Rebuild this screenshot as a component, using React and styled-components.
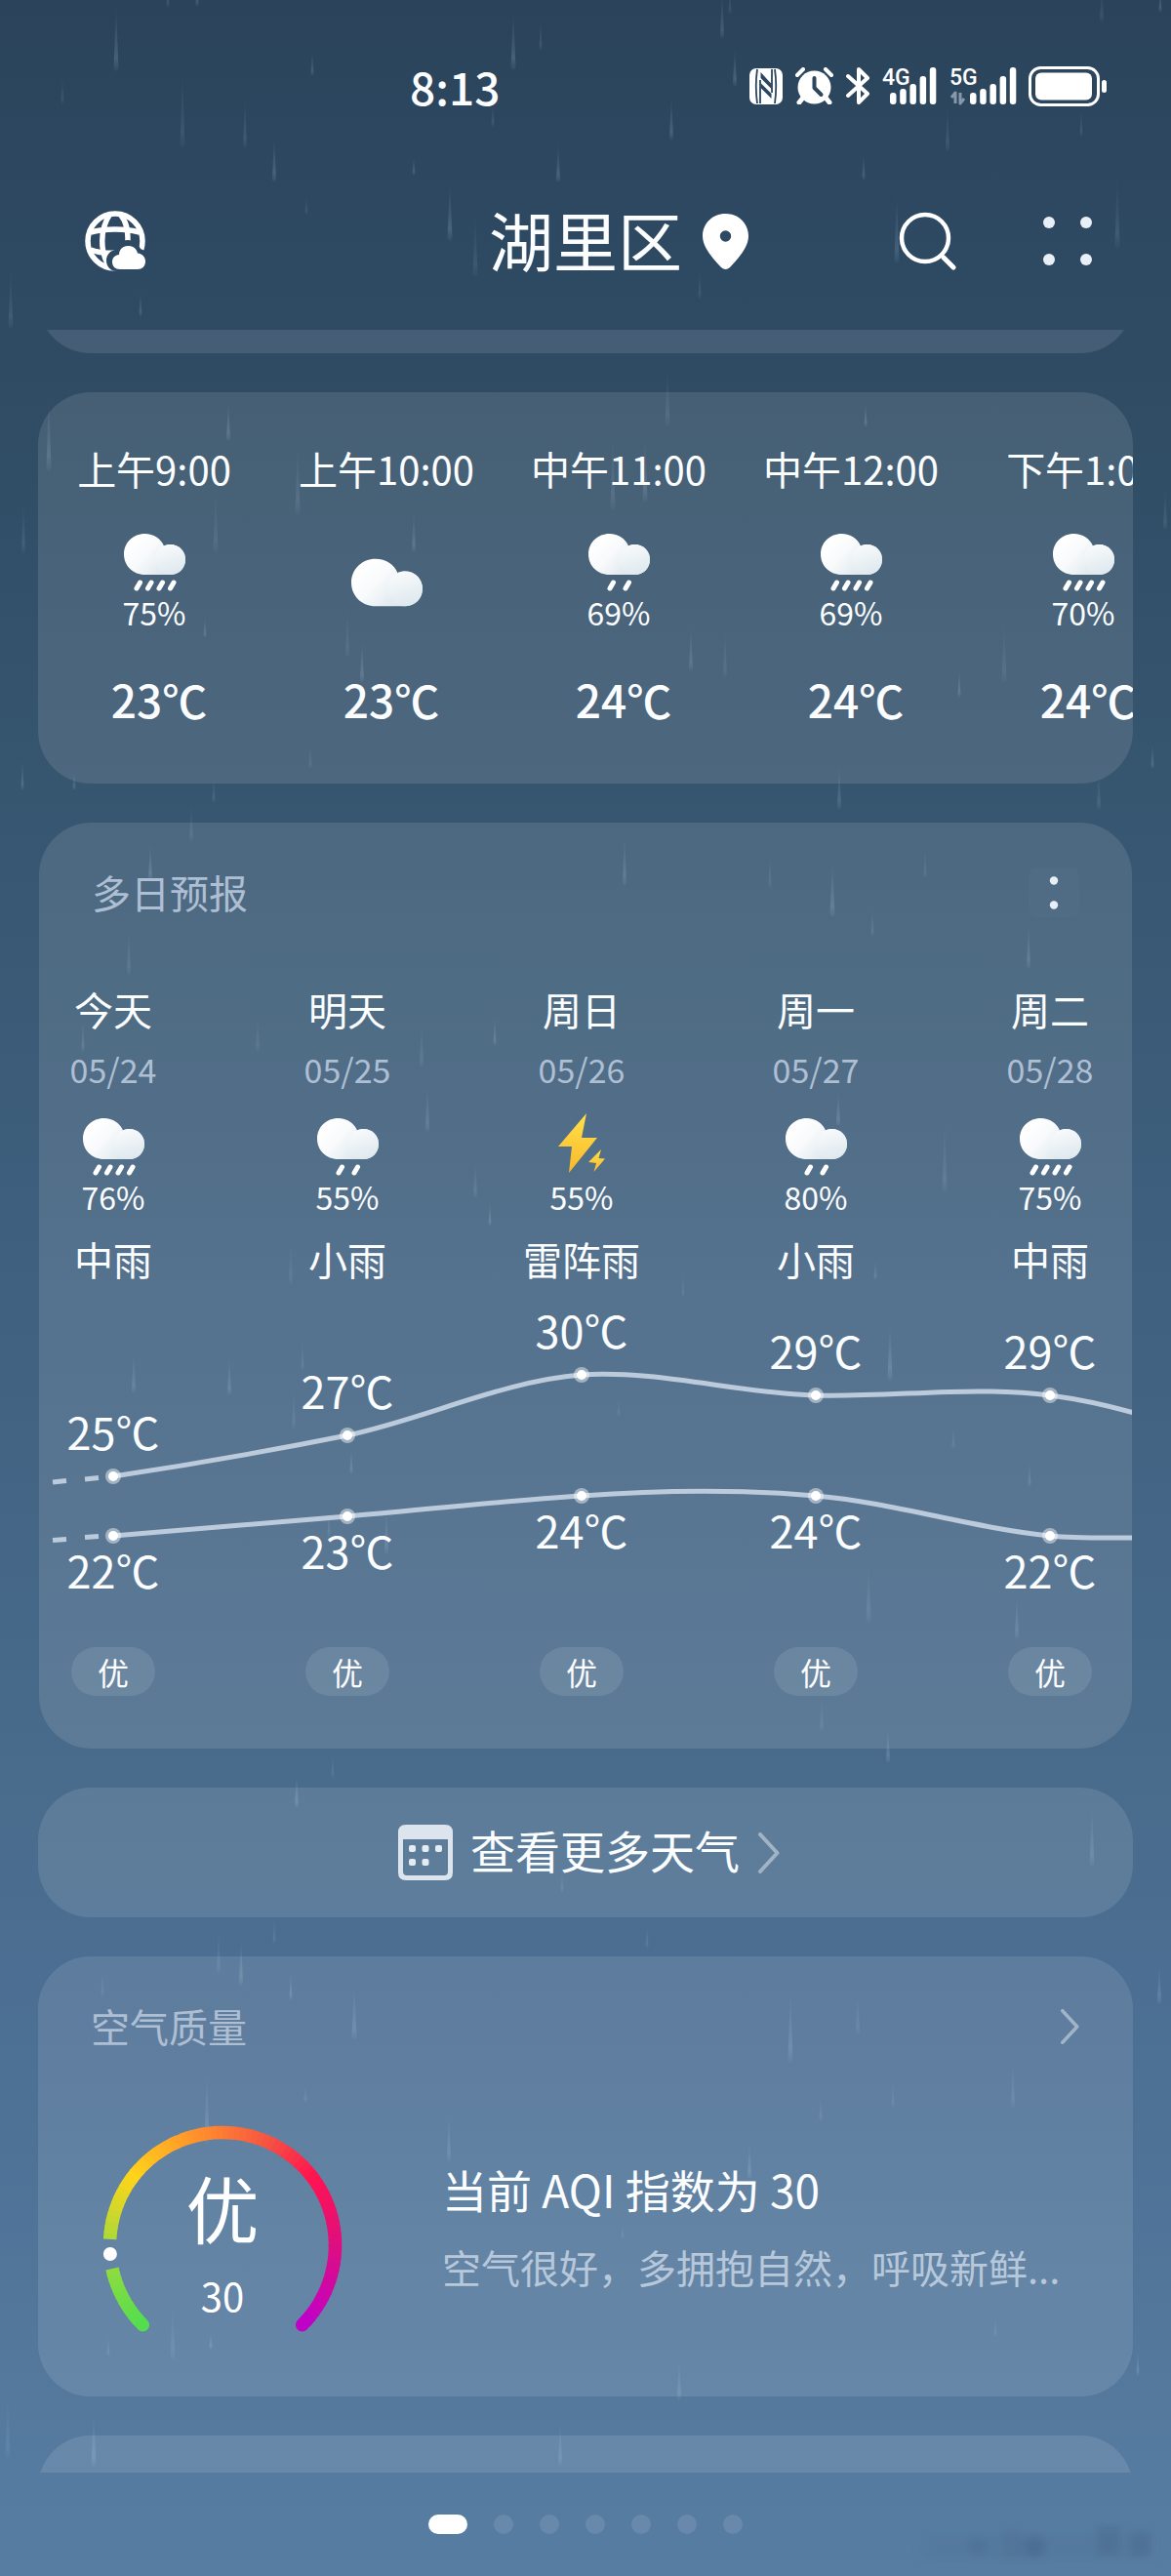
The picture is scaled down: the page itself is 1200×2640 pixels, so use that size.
import React from "react";
import styled, { createGlobalStyle } from "styled-components";

const GlobalStyle = createGlobalStyle`
  * { box-sizing: border-box; }
  body { margin: 0; background: #587da3; }
  button { font: inherit; color: inherit; background: none; border: 0; padding: 0; cursor: pointer; }
  h1, h2, h3, p, ul { margin: 0; padding: 0; font-weight: 400; list-style: none; }
  svg { display: block; flex: none; }
`;

const FONT = '"Noto Sans CJK SC", "Noto Sans", sans-serif';
const MUTED = "#aebfd4";

/* ---------- data ---------- */

const HOURS = [
  { time: "上午9:00", drops: 4, chance: "75%", temp: "23℃" },
  { time: "上午10:00", drops: 0, chance: "", temp: "23℃" },
  { time: "中午11:00", drops: 2, chance: "69%", temp: "24℃" },
  { time: "中午12:00", drops: 4, chance: "69%", temp: "24℃" },
  { time: "下午1:00", drops: 4, chance: "70%", temp: "24℃" },
];

const DAYS = [
  { name: "今天", date: "05/24", drops: 4, chance: "76%", text: "中雨", hi: 25, lo: 22, hiY: 195, loY: 256 },
  { name: "明天", date: "05/25", drops: 2, chance: "55%", text: "小雨", hi: 27, lo: 23, hiY: 153, loY: 236 },
  { name: "周日", date: "05/26", storm: true, chance: "55%", text: "雷阵雨", hi: 30, lo: 24, hiY: 91, loY: 215 },
  { name: "周一", date: "05/27", drops: 2, chance: "80%", text: "小雨", hi: 29, lo: 24, hiY: 112, loY: 215 },
  { name: "周二", date: "05/28", drops: 4, chance: "75%", text: "中雨", hi: 29, lo: 22, hiY: 112, loY: 256 },
];

/* x, top, length of each falling streak */
const STREAKS = [
  [119, 5, 68], [172, -20, 28], [202, -25, 32], [187, 70, 82], [281, 137, 50], [251, 97, 55], [320, 50, 28],
  [314, 200, 20], [526, 10, 62], [554, 18, 34], [424, 160, 20], [487, 217, 67], [461, 185, 62], [11, 275, 62],
  [144, 297, 28], [64, 77, 30], [572, 145, 42], [505, 105, 25], [740, -10, 50], [748, -15, 30], [688, 97, 47],
  [971, 107, 48], [885, 155, 30], [1129, -15, 38], [1189, -15, 28], [1145, 178, 77], [919, 197, 73],
  [717, 273, 34], [753, 47, 42], [1108, 110, 30], [50, 403, 80], [221, 500, 67], [234, 410, 42],
  [305, 453, 75], [424, 523, 43], [356, 620, 54], [371, 653, 47], [24, 513, 54], [210, 630, 24], [318, 760, 28],
  [23, 777, 33], [219, 793, 30], [76, 790, 20], [684, 375, 62], [887, 410, 28], [628, 445, 78], [661, 447, 67],
  [1029, 633, 67], [983, 683, 32], [1194, 500, 43], [708, 640, 48], [743, 640, 55], [1181, 760, 28],
  [1126, 790, 40], [860, 780, 50], [196, 820, 43], [154, 863, 40], [132, 950, 50], [85, 1043, 35],
  [264, 1040, 38], [507, 1040, 32], [432, 1047, 47], [438, 1110, 50], [298, 1267, 50], [502, 1230, 27],
  [487, 1187, 41], [640, 853, 55], [789, 875, 35], [853, 883, 57], [894, 927, 33], [1054, 943, 50],
  [948, 867, 33], [859, 1117, 37], [968, 1150, 73], [897, 1290, 22], [700, 1300, 30], [235, 1390, 40],
  [310, 1373, 32], [137, 1383, 45], [301, 1420, 45], [360, 1483, 28], [337, 1543, 33], [396, 1543, 50],
  [341, 1793, 30], [912, 1353, 62], [890, 1600, 63], [1042, 1633, 47], [842, 1737, 38], [910, 1767, 40],
  [977, 1460, 25], [1055, 1497, 27], [634, 1432, 20], [304, 1815, 38], [576, 1915, 25], [1119, 1850, 63],
  [224, 1970, 53], [247, 1983, 52], [281, 1963, 29], [363, 2033, 57], [105, 2017, 30], [298, 2020, 30],
  [663, 1970, 27], [810, 2037, 77], [879, 2040, 45], [1188, 2010, 44], [1038, 2110, 50], [212, 2120, 77],
  [177, 2357, 62], [216, 2390, 18], [111, 2393, 22], [460, 2163, 53], [8, 2453, 67], [96, 2470, 58],
  [313, 2135, 20], [574, 2480, 47], [915, 2130, 30], [768, 2193, 40], [638, 2277, 18], [696, 2417, 43],
  [1020, 2373, 22], [1166, 2407, 28], [841, 2147, 27],
];

const AQI_STOPS = [
  [0, [84, 222, 78]],
  [0.16, [166, 218, 58]],
  [0.3, [255, 212, 26]],
  [0.46, [255, 138, 46]],
  [0.58, [246, 84, 66]],
  [0.69, [255, 20, 80]],
  [0.83, [222, 14, 130]],
  [1, [190, 0, 204]],
];

/* ---------- page ---------- */

const Page = styled.div`
  position: relative;
  min-height: 100vh;
  overflow: hidden;
  display: flex;
  flex-direction: column;
  font-family: ${FONT};
  color: #fbfdff;
  background: linear-gradient(#2b445c 0%, #2f4b64 14%, #36556f 30%, #3f607f 49%, #496b8b 68%, #4c6f94 79%, #54799d 93%, #587da3 100%);
`;

const RainLayer = styled.svg`
  position: absolute;
  inset: 0;
  pointer-events: none;
`;

const StatusBar = styled.div`
  position: relative;
  display: flex;
  align-items: center;
  height: 160px;
  padding: 16px 66px 0 35%;
`;

const Clock = styled.time`
  font-size: 46px;
  line-height: 56px;
  font-weight: 500;
`;

const StatusIcons = styled.div`
  display: flex;
  align-items: center;
  gap: 13px;
  margin-left: auto;
`;

const Header = styled.header`
  position: relative;
  display: grid;
  grid-template-columns: 1fr auto 1fr;
  align-items: center;
  height: 178px;
  padding: 0 75px 4px 87px;
`;

const City = styled.h1`
  padding: 0 12px 6px 0;
  font-size: 66px;
  line-height: 72px;
`;

const HeaderEnd = styled.div`
  display: flex;
  align-items: center;
  padding-left: 9px;
`;

const Actions = styled.div`
  display: flex;
  align-items: center;
  gap: 82px;
  margin-left: auto;
`;

const IconButton = styled.button`
  display: flex;
  align-items: center;
  justify-content: center;
`;

const Feed = styled.main`
  position: relative;
  display: flex;
  flex-direction: column;
  gap: 40px;
  padding: 0 39px;
`;

const Card = styled.section`
  overflow: hidden;
  border-radius: 54px;
  background: rgba(255, 255, 255, 0.11);
`;

const Peek = styled.div`
  display: flex;
  align-items: ${(p) => (p.$edge === "top" ? "flex-end" : "flex-start")};
  height: ${(p) => (p.$edge === "top" ? 24 : 38)}px;
  overflow: hidden;
`;

const PeekCard = styled(Card)`
  flex: 1 0 auto;
  height: 120px;
`;

const CardHeader = styled.div`
  display: flex;
  align-items: center;
  justify-content: space-between;
  padding: 47px 54px 0;
`;

const CardTitle = styled.h2`
  padding-bottom: 2px;
  color: ${MUTED};
  font-size: 40px;
  line-height: 48px;
`;

const MenuButton = styled(IconButton)`
  width: 52px;
  height: 50px;
  border-radius: 8px;
  background: rgba(255, 255, 255, 0.02);
`;

/* ---------- hourly ---------- */

const HourList = styled.ul`
  display: flex;
  padding: 50px 0 57px;
`;

const Hour = styled.li`
  flex: 0 0 238px;
  display: flex;
  flex-direction: column;
  align-items: center;
  gap: 39px;
`;

const HourTime = styled.span`
  font-size: 40px;
  line-height: 56px;
  white-space: nowrap;
`;

const HourSky = styled.div`
  display: flex;
  flex-direction: column;
  align-items: center;
  justify-content: center;
  height: 100px;
`;

const Chance = styled.span`
  font-size: 32px;
  line-height: 40px;
`;

const HourTemp = styled.span`
  padding-left: 10px;
  font-size: 46px;
  line-height: 60px;
  font-weight: 500;
`;

/* ---------- daily ---------- */

const DayRow = styled.ul`
  display: flex;
  gap: 88px;
  padding-top: ${(p) => p.$top || 0}px;
`;

const Day = styled.li`
  flex: 0 0 152px;
  display: flex;
  flex-direction: column;
  align-items: center;
`;

const DayText = styled.span`
  font-size: 40px;
  line-height: 56px;
  white-space: nowrap;
`;

const DayDate = styled.span`
  margin: 12px 0 28px;
  color: ${MUTED};
  font-size: 34px;
  line-height: 44px;
`;

const DaySummary = styled(DayText)`
  margin-top: 16px;
`;

const Badge = styled.span`
  width: 86px;
  border-radius: 25px;
  background: rgba(255, 255, 255, 0.1);
  font-size: 32px;
  line-height: 50px;
  text-align: center;
`;

const DailyCard = styled(Card)`
  margin: 0 1px;
  padding-bottom: 54px;
`;

const ChartLabel = styled.text`
  font-family: ${FONT};
  font-size: 45px;
  fill: #fbfdff;
  text-anchor: middle;
`;

/* ---------- more + air quality ---------- */

const MoreButton = styled.button`
  display: flex;
  align-items: center;
  justify-content: center;
  gap: 18px;
  width: 100%;
  height: 133px;
  padding-left: 8px;
  font-size: 46px;
  line-height: 56px;
`;

const MoreLabel = styled.span`
  padding-bottom: 8px;
`;

const AirBody = styled.div`
  display: flex;
  align-items: center;
  gap: 102px;
  padding: 76px 66px 66px;
`;

const AirText = styled.div`
  display: flex;
  flex: 1;
  flex-direction: column;
  gap: 20px;
  min-width: 0;
  padding-bottom: 6px;
`;

const AirTitle = styled.h3`
  font-size: 46px;
  line-height: 64px;
`;

const AirNote = styled.p`
  color: #b7c8db;
  font-size: 40px;
  line-height: 56px;
  white-space: nowrap;
`;

const GaugeText = styled.text`
  font-family: ${FONT};
  font-size: ${(p) => p.$size}px;
  fill: #fff;
  text-anchor: middle;
`;

const NetLabel = styled.text`
  font-family: Roboto, sans-serif;
  font-size: 23px;
  font-weight: 500;
  fill: #fff;
`;

const SignalSvg = styled.svg`
  overflow: visible;
`;

const Pager = styled.nav`
  position: relative;
  display: flex;
  justify-content: center;
  gap: 27px;
  padding: 43px 0;
`;

const PageDot = styled.button`
  width: ${(p) => (p.$active ? 40 : 20)}px;
  height: 20px;
  border-radius: 10px;
  background: ${(p) => (p.$active ? "#fff" : "rgba(255,255,255,0.1)")};
`;

const Smudge = styled.svg`
  position: absolute;
  right: 0;
  bottom: 0;
`;

const HiddenSvg = styled.svg`
  position: absolute;
`;

/* ---------- drawings ---------- */

function Rain() {
  return (
    <RainLayer width="100%" height="100%" aria-hidden="true">
      <defs>
        <linearGradient id="streak" x1="0" y1="0" x2="0" y2="1">
          <stop offset="0" stopColor="#bcd8ee" stopOpacity="0" />
          <stop offset="0.8" stopColor="#bcd8ee" stopOpacity="1" />
          <stop offset="1" stopColor="#bcd8ee" stopOpacity="0.2" />
        </linearGradient>
      </defs>
      {STREAKS.map(([x, y, h], i) => {
        const w = h > 55 ? 5 : h > 35 ? 4 : 3;
        return (
          <path
            key={i}
            d={`M${x} ${y} L${x + w / 2} ${y + h - 3} Q${x} ${y + h + 3} ${x - w / 2} ${y + h - 3} Z`}
            fill="url(#streak)"
            opacity={[0.18, 0.12, 0.16, 0.1][i % 4]}
          />
        );
      })}
    </RainLayer>
  );
}

function Cloud() {
  return (
    <>
      <path
        d="M21.5 42 C9.5 42 0 33 0 21 C0 9 9.5 0 21.5 0 C30.5 0 38 5 41 12.5 C43 11.5 45 11 47.5 11 C56.5 11 63 17.5 63 26.5 C63 35.5 56.5 42 47.5 42 Z"
        fill="url(#cloudBase)"
      />
      <circle cx="47.5" cy="26.5" r="15.5" fill="url(#cloudFront)" />
    </>
  );
}

function IconDefs() {
  return (
    <HiddenSvg width="0" height="0" aria-hidden="true">
      <defs>
        <linearGradient id="cloudBase" gradientUnits="userSpaceOnUse" x1="8" y1="10" x2="42" y2="42">
          <stop offset="0" stopColor="#ffffff" />
          <stop offset="0.4" stopColor="#f8fafb" />
          <stop offset="1" stopColor="#dbe6ec" />
        </linearGradient>
        <linearGradient id="cloudFront" gradientUnits="userSpaceOnUse" x1="42" y1="12" x2="52" y2="42">
          <stop offset="0" stopColor="#f8fafb" />
          <stop offset="1" stopColor="#dde8ee" />
        </linearGradient>
        <linearGradient id="bolt" x1="0" y1="0" x2="0" y2="1">
          <stop offset="0" stopColor="#ffe14a" />
          <stop offset="1" stopColor="#f9b82a" />
        </linearGradient>
      </defs>
    </HiddenSvg>
  );
}

function SkyIcon({ drops, storm }) {
  if (storm) {
    return (
      <SignalSvg width="63" height="60" viewBox="0 0 63 60">
        <path d="M36 -5 L7 29 L21 29 L18 56 L47 20 L31 20 Z" fill="url(#bolt)" />
        <path d="M51 32 L38 45 L46 46 L43.5 55 L55 41.5 L48.5 41 Z" fill="url(#bolt)" />
      </SignalSvg>
    );
  }
  if (!drops) {
    return (
      <svg width="73" height="50" viewBox="0 0 63 42">
        <Cloud />
      </svg>
    );
  }
  const xs = drops === 4 ? [13, 24.5, 36, 47.5] : [22, 38];
  return (
    <svg width="63" height="60" viewBox="0 0 63 60">
      <Cloud />
      {xs.map((x) => (
        <path key={x} d={`M${x} 56 L${x + 3.5} 50`} stroke="#fff" strokeWidth="5" strokeLinecap="round" />
      ))}
    </svg>
  );
}

function TemperatureChart() {
  const line = { fill: "none", stroke: "#bccbdc", strokeWidth: 5 };
  return (
    <svg width="1122" height="370" viewBox="0 0 1122 370" role="img" aria-label="气温曲线">
      <path d="M76 195 C156 183 236 169 316 153 C396 136 476 97 556 91 C636 86 716 110 796 112 C876 114 956 102 1036 112 C1066 116 1094 122 1122 130" {...line} />
      <path d="M76 256 C156 250 236 243 316 236 C396 229 476 220 556 215 C636 209 716 208 796 215 C876 222 956 248 1036 256 C1066 259 1094 258 1122 258" {...line} />
      <path d="M14 201 L28 199.5 M47 198 L61 196.5 M14 260.5 L28 259.5 M47 257.5 L61 256.5" {...line} />
      {DAYS.map((d, i) => {
        const x = 76 + i * 240;
        return (
          <g key={d.date}>
            <circle cx={x} cy={d.hiY} r="8" fill="#fff" fillOpacity="0.45" />
            <circle cx={x} cy={d.hiY} r="5" fill="#fff" />
            <circle cx={x} cy={d.loY} r="8" fill="#fff" fillOpacity="0.45" />
            <circle cx={x} cy={d.loY} r="5" fill="#fff" />
            <ChartLabel x={x} y={d.hiY - 27}>{d.hi}℃</ChartLabel>
            <ChartLabel x={x} y={d.loY + 54}>{d.lo}℃</ChartLabel>
          </g>
        );
      })}
    </svg>
  );
}

function mixColor(t) {
  const i = Math.max(1, AQI_STOPS.findIndex(([s]) => s >= t));
  const [a, ca] = AQI_STOPS[i - 1];
  const [b, cb] = AQI_STOPS[i];
  const k = (t - a) / (b - a);
  return `rgb(${ca.map((c, n) => Math.round(c + (cb[n] - c) * k)).join(",")})`;
}

function gaugePoint(deg) {
  const r = ((135 + deg) * Math.PI) / 180;
  return [123 + 115.5 * Math.cos(r), 123 + 115.5 * Math.sin(r)];
}

function AqiGauge() {
  const arcs = [];
  for (let a = 0; a < 270; a += 3) {
    if (a >= 33 && a < 48) continue;
    const end = Math.min(270, a + (a === 30 ? 3 : 3.6));
    const [x1, y1] = gaugePoint(a);
    const [x2, y2] = gaugePoint(end);
    arcs.push(
      <path
        key={a}
        d={`M${x1} ${y1} A115.5 115.5 0 0 1 ${x2} ${y2}`}
        stroke={mixColor(a / 270)}
        strokeWidth="13.5"
        strokeLinecap={a === 0 || a === 267 ? "round" : "butt"}
        fill="none"
      />
    );
  }
  const [dx, dy] = gaugePoint(40.5);
  return (
    <svg width="246" height="212" viewBox="0 0 246 212" role="img" aria-label="空气质量指数 30">
      {arcs}
      <circle cx={dx} cy={dy} r="7" fill="#fff" />
      <GaugeText x="123" y="116" $size={75}>优</GaugeText>
      <GaugeText x="123" y="191" $size={40}>30</GaugeText>
    </svg>
  );
}

function Signal({ label, offset, width, idle }) {
  const heights = [12, 16, 21, 29, 38];
  return (
    <SignalSvg width={width} height="38" viewBox={`0 0 ${width} 38`}>
      <NetLabel x="0" y="18">{label}</NetLabel>
      {heights.map((h, i) => (
        <rect key={h} x={offset + i * 10.2} y={38 - h} width="6.5" height={h} rx="3" fill="#fff" />
      ))}
      {idle && (
        <path d="M2 31 L6 26 L6 37 M11 26 L11 37 L15 32" stroke="#8798ab" strokeWidth="3" fill="none" strokeLinejoin="round" />
      )}
    </SignalSvg>
  );
}

function NfcIcon() {
  return (
    <svg width="34" height="37" viewBox="0 0 34 37">
      <rect x="0" y="0" width="34" height="37" rx="7" fill="#fff" />
      <path d="M8 1 Q5.5 18 8 36 M11 12 V36 M23 1 V25 M26 1 Q28.5 18 26 36" stroke="#2c465e" strokeWidth="1.8" fill="none" />
      <path d="M11.5 10 L22.5 21 V16 L11.5 4 Z M11.5 20 L22.5 31 V26 L11.5 15 Z" fill="#2c465e" />
    </svg>
  );
}

function AlarmIcon() {
  return (
    <svg width="39" height="38" viewBox="0 0 39 38">
      <circle cx="19.5" cy="20.5" r="17" fill="#fff" />
      <path d="M2 8 L8 2 M37 8 L31 2" stroke="#fff" strokeWidth="4" strokeLinecap="round" />
      <path d="M8 31 L4 36 M31 31 L35 36" stroke="#fff" strokeWidth="5" strokeLinecap="round" />
      <path d="M19.5 11 V21 L26.5 28" stroke="#2c465e" strokeWidth="4" fill="none" strokeLinecap="round" strokeLinejoin="round" />
    </svg>
  );
}

function BluetoothIcon() {
  return (
    <svg width="24" height="38" viewBox="0 0 24 38">
      <path d="M2 9 L22 27 L13 36 V2 L22 11 L2 29" stroke="#fff" strokeWidth="4" fill="none" strokeLinecap="round" strokeLinejoin="round" />
    </svg>
  );
}

function BatteryIcon() {
  return (
    <svg width="80" height="41" viewBox="0 0 80 41">
      <rect x="1.5" y="1.5" width="70" height="38" rx="11" fill="none" stroke="#fff" strokeWidth="3" />
      <rect x="7" y="6.5" width="58" height="28" rx="6" fill="#fff" />
      <rect x="75" y="14" width="5" height="13" rx="2.5" fill="#fff" />
    </svg>
  );
}

function GlobeIcon() {
  return (
    <svg width="62" height="62" viewBox="0 0 62 62">
      <defs>
        <mask id="globeCut">
          <rect width="62" height="62" fill="#fff" />
          <path d="M33 62 C26 62 22 57 22 51 C22 45 26 41 31 40 C32 34 38 30 44 30 C50 30 55 34 57 39 L64 42 V62 Z" fill="#000" />
        </mask>
      </defs>
      <g mask="url(#globeCut)" fill="none" stroke="#fff" strokeWidth="5.5">
        <circle cx="31" cy="31" r="28" />
        <path d="M26 3 C15 19 15 43 26 59 M36 3 C43 12 44 20 44 31 M6 22 C20 18 42 18 56 22 M6 40 C14 43 22 44 31 43" />
      </g>
      <path d="M36 60 C31 60 28 57 28 52.5 C28 48 31 45.5 35 45 C35 39.5 39 36 44.5 36 C49.5 36 53 39 54 43.5 C59 44 62 47.5 62 52 C62 57 58.5 60 54 60 Z" fill="#fff" />
    </svg>
  );
}

function Chevron({ height }) {
  return (
    <svg width={height / 2 + 3} height={height} viewBox="0 0 24 42">
      <path d="M3 2 L20.5 21 L3 40" fill="none" stroke="#fff" strokeOpacity="0.42" strokeWidth="4" strokeLinecap="round" strokeLinejoin="round" />
    </svg>
  );
}

function CalendarIcon() {
  return (
    <svg width="56" height="57" viewBox="0 0 56 57">
      <path fillRule="evenodd" d="M8 0 H48 Q56 0 56 8 V49 Q56 57 48 57 H8 Q0 57 0 49 V8 Q0 0 8 0 Z M5 15 V48 Q5 52 9 52 H47 Q51 52 51 48 V15 Z" fill="#dce5ee" />
      {[[11, 21], [24.5, 21], [38, 21], [11, 35], [24.5, 35]].map(([x, y]) => (
        <rect key={`${x}-${y}`} x={x} y={y} width="7" height="7" rx="2" fill="#e3ebf3" />
      ))}
    </svg>
  );
}

/* ---------- app ---------- */

export default function App() {
  return (
    <Page>
      <GlobalStyle />
      <IconDefs />
      <Rain />

      <StatusBar>
        <Clock>8:13</Clock>
        <StatusIcons>
          <NfcIcon />
          <AlarmIcon />
          <BluetoothIcon />
          <Signal label="4G" offset={8} width={56} />
          <Signal label="5G" offset={21} width={68} idle />
          <BatteryIcon />
        </StatusIcons>
      </StatusBar>

      <Header>
        <div>
          <IconButton aria-label="全球天气"><GlobeIcon /></IconButton>
        </div>
        <City>湖里区</City>
        <HeaderEnd>
          <svg width="47" height="57" viewBox="0 0 47 57">
            <path fillRule="evenodd" d="M23.5 0 C37 0 47 10 47 23 C47 34 38 44 28 55 Q23.5 59 19 55 C9 44 0 34 0 23 C0 10 10 0 23.5 0 Z M23.5 17.3 A5.7 5.7 0 1 0 23.5 28.7 A5.7 5.7 0 1 0 23.5 17.3 Z" fill="#fff" />
          </svg>
          <Actions>
            <IconButton aria-label="搜索">
              <svg width="60" height="60" viewBox="0 0 60 60">
                <circle cx="27" cy="27" r="24" fill="none" stroke="#fff" strokeWidth="4.5" />
                <path d="M46 47 L56 57" stroke="#fff" strokeWidth="5" strokeLinecap="round" />
              </svg>
            </IconButton>
            <IconButton aria-label="更多">
              <svg width="62" height="62" viewBox="0 0 62 62" fill="#e9eff6">
                <circle cx="12" cy="12" r="6" />
                <circle cx="50" cy="12" r="6" />
                <circle cx="12" cy="50" r="6" />
                <circle cx="50" cy="50" r="6" />
              </svg>
            </IconButton>
          </Actions>
        </HeaderEnd>
      </Header>

      <Feed>
        <Peek $edge="top"><PeekCard as="div" /></Peek>

        <Card>
          <HourList>
            {HOURS.map((h) => (
              <Hour key={h.time}>
                <HourTime>{h.time}</HourTime>
                <HourSky>
                  <SkyIcon drops={h.drops} />
                  {h.chance && <Chance>{h.chance}</Chance>}
                </HourSky>
                <HourTemp>{h.temp}</HourTemp>
              </Hour>
            ))}
          </HourList>
        </Card>

        <DailyCard>
          <CardHeader>
            <CardTitle>多日预报</CardTitle>
            <MenuButton aria-label="预报选项">
              <svg width="10" height="36" viewBox="0 0 10 36" fill="#e9eff6">
                <circle cx="5" cy="5.5" r="4.2" />
                <circle cx="5" cy="30.5" r="4.2" />
              </svg>
            </MenuButton>
          </CardHeader>
          <DayRow $top={66}>
            {DAYS.map((d) => (
              <Day key={d.date}>
                <DayText>{d.name}</DayText>
                <DayDate>{d.date}</DayDate>
                <SkyIcon drops={d.drops} storm={d.storm} />
                <Chance>{d.chance}</Chance>
                <DaySummary>{d.text}</DaySummary>
              </Day>
            ))}
          </DayRow>
          <TemperatureChart />
          <DayRow>
            {DAYS.map((d) => (
              <Day key={d.date}>
                <Badge>优</Badge>
              </Day>
            ))}
          </DayRow>
        </DailyCard>

        <Card>
          <MoreButton>
            <CalendarIcon />
            <MoreLabel>查看更多天气</MoreLabel>
            <Chevron height={42} />
          </MoreButton>
        </Card>

        <Card>
          <CardHeader>
            <CardTitle>空气质量</CardTitle>
            <IconButton aria-label="查看空气质量"><Chevron height={36} /></IconButton>
          </CardHeader>
          <AirBody>
            <AqiGauge />
            <AirText>
              <AirTitle>当前 AQI 指数为 30</AirTitle>
              <AirNote>空气很好，多拥抱自然，呼吸新鲜...</AirNote>
            </AirText>
          </AirBody>
        </Card>

        <Peek $edge="bottom"><PeekCard as="div" /></Peek>
      </Feed>

      <Pager aria-label="城市">
        {[0, 1, 2, 3, 4, 5, 6].map((n) => (
          <PageDot key={n} $active={n === 0} aria-label={`第 ${n + 1} 个城市`} />
        ))}
      </Pager>

      <Smudge width="270" height="60" viewBox="0 0 270 60" aria-hidden="true">
        <defs>
          <filter id="soft"><feGaussianBlur stdDeviation="5" /></filter>
        </defs>
        <g filter="url(#soft)" fill="#46688c">
          <rect x="12" y="18" width="236" height="26" rx="12" opacity="0.18" />
          <circle cx="72" cy="30" r="9" opacity="0.35" />
          <circle cx="130" cy="30" r="11" opacity="0.6" />
          <rect x="98" y="14" width="18" height="28" opacity="0.3" />
          <rect x="194" y="9" width="24" height="30" opacity="0.45" />
          <rect x="228" y="14" width="22" height="26" opacity="0.45" />
        </g>
      </Smudge>
    </Page>
  );
}
